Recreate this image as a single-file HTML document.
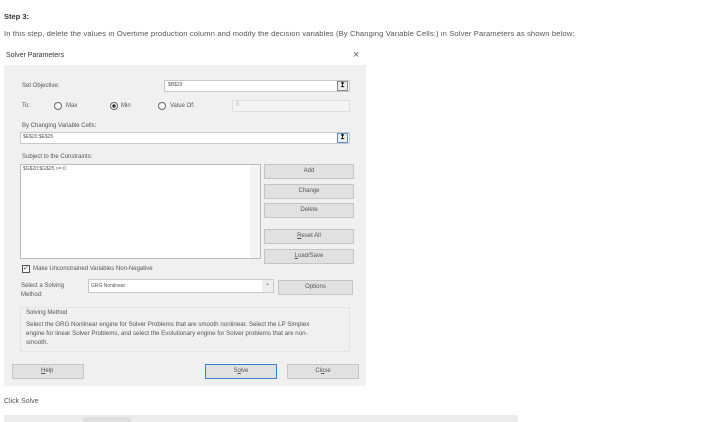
<!DOCTYPE html>
<html><head><style>
*{margin:0;padding:0;box-sizing:border-box}
body{width:705px;height:422px;background:#fff;font-family:"Liberation Sans",sans-serif;color:#444;position:relative;overflow:hidden}
.a{position:absolute;white-space:nowrap}
.t{font-size:6px;color:#555}
.inp{position:absolute;background:#fff;border:1px solid #c8c8c8}
.btn{position:absolute;background:#e1e1e1;border:1px solid #c4c4c4;font-size:6px;color:#555;text-align:center;line-height:13px}
.rad{position:absolute;width:8px;height:8px;border:1px solid #666;border-radius:50%;background:#fff}
.up{position:absolute;width:11px;height:10px;border:1px solid #888;background:#eee;font-size:7px;line-height:8px;text-align:center;color:#000;font-weight:bold}
</style></head><body>
<div class="a" style="left:4px;top:12px;font-size:7.5px;font-weight:bold;color:#333">Step 3:</div>
<div class="a" style="left:4px;top:31px;font-size:7px;color:#555;letter-spacing:0.1px;transform:scaleX(1.09);transform-origin:0 0">In this step, delete the values in Overtime production column and modify the decision variables (By Changing Variable Cells:) in Solver Parameters as shown below:</div>
<div class="a" style="left:6px;top:52px;font-size:7px;color:#333">Solver Parameters</div>
<div class="a" style="left:353px;top:49px;font-size:11px;color:#666">×</div>
<div class="a" style="left:4px;top:65px;width:362px;height:321px;background:#f0f0f0"></div>
<div class="a t" style="left:22px;top:83px">Set Objective:</div>
<div class="inp" style="left:164px;top:80px;width:186px;height:12px"></div>
<div class="a t" style="left:168px;top:82px;font-size:5px">$B$29</div>
<div class="up" style="left:337px;top:81px">↥</div>
<div class="a t" style="left:22px;top:103px">To:</div>
<div class="rad" style="left:54px;top:102px"></div><div class="a t" style="left:66px;top:103px">Max</div>
<div class="rad" style="left:110px;top:102px;background:radial-gradient(circle,#333 40%,#fff 45%)"></div><div class="a t" style="left:121px;top:103px">Min</div>
<div class="rad" style="left:158px;top:102px"></div><div class="a t" style="left:170px;top:103px">Value Of:</div>
<div class="inp" style="left:232px;top:100px;width:118px;height:12px;background:#f4f4f4;border-color:#ddd"></div>
<div class="a t" style="left:236px;top:102px;color:#aaa">0</div>
<div class="a t" style="left:22px;top:123px">By Changing Variable Cells:</div>
<div class="inp" style="left:20px;top:132px;width:330px;height:12px"></div>
<div class="a t" style="left:23px;top:134px;font-size:5px">$E$20:$E$25</div>
<div class="up" style="left:337px;top:133px;border-color:#5a8fd0">↥</div>
<div class="a t" style="left:22px;top:154px">Subject to the Constraints:</div>
<div class="inp" style="left:20px;top:164px;width:241px;height:95px;border-color:#bbb"></div>
<div class="a" style="left:250px;top:165px;width:10px;height:93px;background:#f4f4f4"></div>
<div class="a t" style="left:23px;top:166px;font-size:5px">$G$20:$G$25 &gt;= 0</div>
<div class="btn" style="left:264px;top:164px;width:90px;height:15px">Add</div>
<div class="btn" style="left:264px;top:184px;width:90px;height:15px">Change</div>
<div class="btn" style="left:264px;top:203px;width:90px;height:15px">Delete</div>
<div class="btn" style="left:264px;top:229px;width:90px;height:15px"><u>R</u>eset All</div>
<div class="btn" style="left:264px;top:249px;width:90px;height:15px"><u>L</u>oad/Save</div>
<div class="a" style="left:22px;top:265px;width:8px;height:8px;border:1px solid #555;background:#fff;font-size:7px;line-height:6px">✓</div>
<div class="a t" style="left:33px;top:266px">Make Unconstrained Variables Non-Negative</div>
<div class="a t" style="left:21px;top:282px;line-height:9px">Select a Solving<br>Method:</div>
<div class="inp" style="left:88px;top:279px;width:186px;height:14px"></div>
<div class="a" style="left:262px;top:280px;width:11px;height:12px;background:#eee;font-size:6px;text-align:center">⌄</div>
<div class="a t" style="left:91px;top:283px;font-size:5px">GRG Nonlinear</div>
<div class="btn" style="left:278px;top:280px;width:75px;height:15px">Options</div>
<div class="a" style="left:20px;top:307px;width:330px;height:45px;border:1px solid #e4e4e4"></div>
<div class="a t" style="left:26px;top:310px">Solving Method</div>
<div class="a t" style="left:26px;top:320px;font-size:6.2px;line-height:9px;white-space:normal;width:300px">Select the GRG Nonlinear engine for Solver Problems that are smooth nonlinear. Select the LP Simplex engine for linear Solver Problems, and select the Evolutionary engine for Solver problems that are non-smooth.</div>
<div class="btn" style="left:12px;top:364px;width:72px;height:15px;text-align:left;padding-left:28px"><u>H</u>elp</div>
<div class="btn" style="left:205px;top:364px;width:72px;height:15px;border-color:#3c7fd0">S<u>o</u>lve</div>
<div class="btn" style="left:287px;top:364px;width:72px;height:15px">Cl<u>o</u>se</div>
<div class="a" style="left:4px;top:398px;font-size:7px;color:#555">Click Solve</div>
<div class="a" style="left:4px;top:415px;width:514px;height:7px;background:#ececec"></div>
<div class="a" style="left:83px;top:417px;width:48px;height:5px;background:#e0e0e0"></div>
</body></html>
